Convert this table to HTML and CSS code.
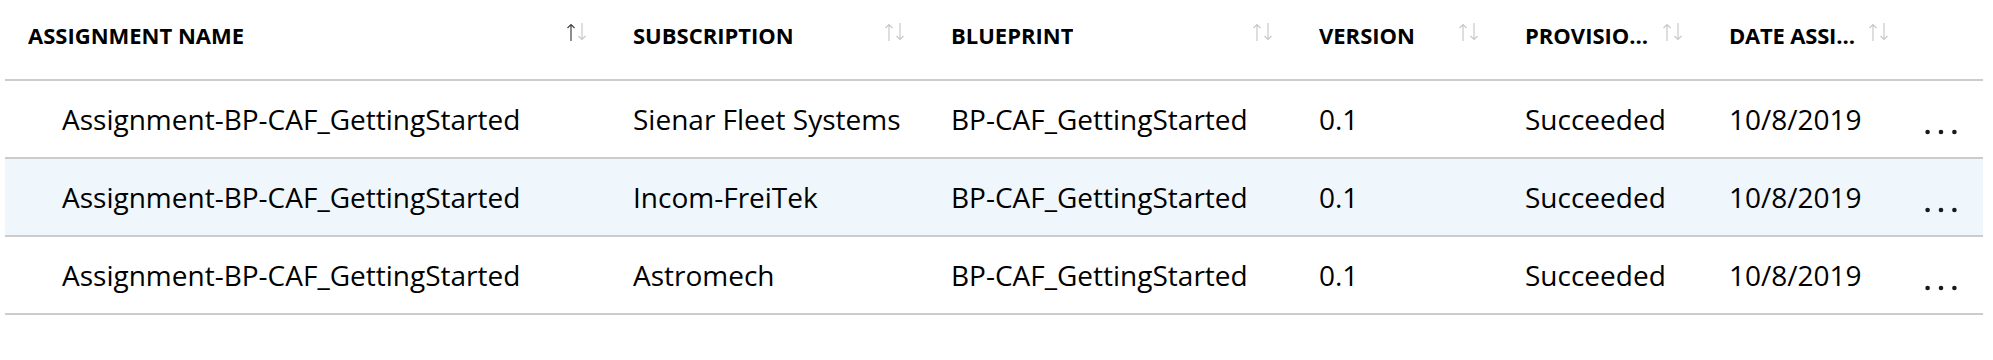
FILE: index.html
```html
<!DOCTYPE html>
<html lang="en">
<head>
<meta charset="utf-8">
<title>Blueprint assignments</title>
<link rel="stylesheet" href="styles.css">
</head>
<body>
<div class="table" role="table">
  <div class="row head" role="row">
    <div class="hcell first" role="columnheader"><span class="htext">ASSIGNMENT NAME</span>
      <svg class="sort" viewBox="0 0 22 18" width="22" height="18"><g fill="none" stroke-width="1.2"><path class="up active" d="M5 1.5V18M1.5 5L5 1.5L8.5 5"/><path class="down" d="M16 0V16.5M12.5 13L16 16.5L19.5 13"/></g></svg></div>
    <div class="hcell" role="columnheader"><span class="htext">SUBSCRIPTION</span>
      <svg class="sort" viewBox="0 0 22 18" width="22" height="18"><g fill="none" stroke-width="1.2"><path class="up" d="M5 1.5V18M1.5 5L5 1.5L8.5 5"/><path class="down" d="M16 0V16.5M12.5 13L16 16.5L19.5 13"/></g></svg></div>
    <div class="hcell" role="columnheader"><span class="htext">BLUEPRINT</span>
      <svg class="sort" viewBox="0 0 22 18" width="22" height="18"><g fill="none" stroke-width="1.2"><path class="up" d="M5 1.5V18M1.5 5L5 1.5L8.5 5"/><path class="down" d="M16 0V16.5M12.5 13L16 16.5L19.5 13"/></g></svg></div>
    <div class="hcell" role="columnheader"><span class="htext">VERSION</span>
      <svg class="sort" viewBox="0 0 22 18" width="22" height="18"><g fill="none" stroke-width="1.2"><path class="up" d="M5 1.5V18M1.5 5L5 1.5L8.5 5"/><path class="down" d="M16 0V16.5M12.5 13L16 16.5L19.5 13"/></g></svg></div>
    <div class="hcell" role="columnheader"><span class="htext">PROVISIONING STATE</span>
      <svg class="sort" viewBox="0 0 22 18" width="22" height="18"><g fill="none" stroke-width="1.2"><path class="up" d="M5 1.5V18M1.5 5L5 1.5L8.5 5"/><path class="down" d="M16 0V16.5M12.5 13L16 16.5L19.5 13"/></g></svg></div>
    <div class="hcell last" role="columnheader"><span class="htext">DATE ASSIGNED</span>
      <svg class="sort" viewBox="0 0 22 18" width="22" height="18"><g fill="none" stroke-width="1.2"><path class="up" d="M5 1.5V18M1.5 5L5 1.5L8.5 5"/><path class="down" d="M16 0V16.5M12.5 13L16 16.5L19.5 13"/></g></svg></div>
    <div class="hcell actions" role="columnheader"></div>
  </div>

  <div class="row data" role="row">
    <div class="cell first">Assignment-BP-CAF_GettingStarted</div>
    <div class="cell">Sienar Fleet Systems</div>
    <div class="cell">BP-CAF_GettingStarted</div>
    <div class="cell">0.1</div>
    <div class="cell">Succeeded</div>
    <div class="cell">10/8/2019</div>
    <div class="cell more"><svg viewBox="0 0 32 6" width="32" height="6"><circle cx="2.6" cy="3" r="2.3"/><circle cx="16" cy="3" r="2.3"/><circle cx="29.4" cy="3" r="2.3"/></svg></div>
  </div>

  <div class="row data selected" role="row">
    <div class="cell first">Assignment-BP-CAF_GettingStarted</div>
    <div class="cell">Incom-FreiTek</div>
    <div class="cell">BP-CAF_GettingStarted</div>
    <div class="cell">0.1</div>
    <div class="cell">Succeeded</div>
    <div class="cell">10/8/2019</div>
    <div class="cell more"><svg viewBox="0 0 32 6" width="32" height="6"><circle cx="2.6" cy="3" r="2.3"/><circle cx="16" cy="3" r="2.3"/><circle cx="29.4" cy="3" r="2.3"/></svg></div>
  </div>

  <div class="row data" role="row">
    <div class="cell first">Assignment-BP-CAF_GettingStarted</div>
    <div class="cell">Astromech</div>
    <div class="cell">BP-CAF_GettingStarted</div>
    <div class="cell">0.1</div>
    <div class="cell">Succeeded</div>
    <div class="cell">10/8/2019</div>
    <div class="cell more"><svg viewBox="0 0 32 6" width="32" height="6"><circle cx="2.6" cy="3" r="2.3"/><circle cx="16" cy="3" r="2.3"/><circle cx="29.4" cy="3" r="2.3"/></svg></div>
  </div>
</div>
</body>
</html>
```

FILE: styles.css
```css
html, body {
  margin: 0;
  padding: 0;
  background: #ffffff;
}

body {
  font-family: "Open Sans", "Noto Sans", "Liberation Sans", sans-serif;
  color: #000000;
}

.table {
  margin-left: 5px;
  width: 1978px;
}

.row {
  display: grid;
  grid-template-columns: 628px 318px 368px 206px 204px 196px 58px;
  border-bottom: 2px solid #cccccc;
}

.head {
  height: 79px;
}

.data {
  height: 76px;
}

.selected {
  background: #eff6fc;
}

.hcell {
  display: flex;
  align-items: center;
  justify-content: space-between;
  gap: 13px;
  min-width: 0;
  padding: 0 45px 10px 0;
  font-size: 22px;
  font-weight: 700;
}

.hcell.first {
  padding-left: 23px;
}

.hcell.last {
  gap: 6px;
  padding-right: 35px;
}

.hcell.actions {
  padding: 0;
}

.htext {
  min-width: 0;
  white-space: nowrap;
  overflow: hidden;
  text-overflow: ellipsis;
}

.last .htext {
  letter-spacing: -0.2px;
}

.sort {
  flex: none;
  margin-bottom: 6px;
}

.sort path {
  stroke: #c8c8c8;
}

.sort path.active {
  stroke: #444444;
}

.cell {
  display: flex;
  align-items: center;
  min-width: 0;
  font-size: 28px;
  white-space: nowrap;
}

.cell.first {
  padding-left: 57px;
}

.cell.more {
  padding-top: 26px;
}

.cell.more svg {
  fill: #1a1a1a;
}
```
